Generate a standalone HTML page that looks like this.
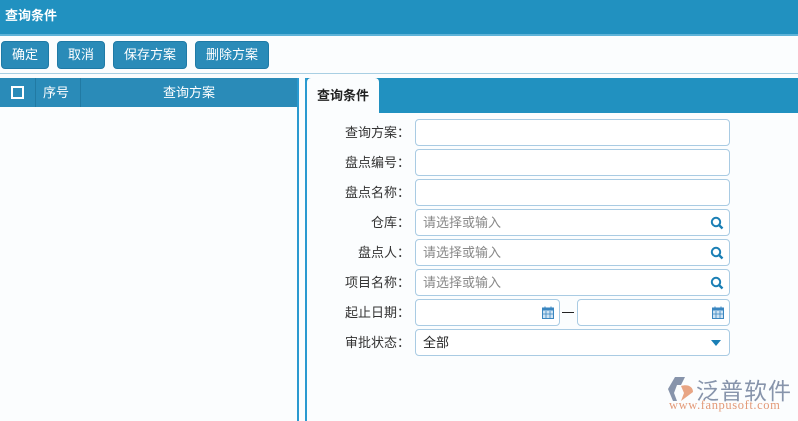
<!DOCTYPE html>
<html><head><meta charset="utf-8"><style>
*{margin:0;padding:0;box-sizing:border-box}
body{width:798px;height:421px;background:#fbfdfe;font-family:"Liberation Sans","Noto Sans CJK SC",sans-serif;font-size:13px;position:relative;overflow:hidden;color:#222}
.abs{position:absolute}
.top{left:0;top:0;width:798px;background:#2191c0;color:#fff;font-weight:bold;font-size:13px;line-height:32px;padding-left:5px;border-bottom:2px solid #5fb3d8;height:36px}
.btn{top:41px;height:28px;background:#2a8bb8;border:1px solid #1f7aa6;border-radius:4px;color:#fff;line-height:26px;text-align:center;font-size:13px}
.sep{left:0;top:73px;width:798px;height:1px;background:#a8cfe3}
.lh{left:0;top:78px;width:297px;height:29px;background:#2a8bb8;color:#fff;line-height:29px}
.lb{left:297px;top:78px;width:2px;height:343px;background:#2a9ad0}
.rb{left:305px;top:78px;width:2px;height:343px;background:#2a9ad0}
.rh{left:307px;top:78px;width:491px;height:35px;background:#2191c0}
.tab{left:307px;top:78px;width:72px;height:35px;background:#fbfdfe;border-radius:4px 4px 0 0;font-weight:bold;line-height:36px;text-align:center;color:#222}
.lbl{left:300px;width:110px;text-align:right;height:27px;line-height:27px;color:#333}
.in{left:415px;width:315px;height:27px;border:1px solid #a9cbe3;border-radius:4px;background:#fff;line-height:25px;padding-left:7px;color:#888}
.ic{position:absolute;right:5px;top:6px}
</style></head><body>
<div class="abs top">查询条件</div>
<div class="abs btn" style="left:1px;width:48px">确定</div>
<div class="abs btn" style="left:57px;width:48px">取消</div>
<div class="abs btn" style="left:113px;width:74px">保存方案</div>
<div class="abs btn" style="left:195px;width:74px">删除方案</div>
<div class="abs sep"></div>
<div class="abs lh">
<div class="abs" style="left:11px;top:8px;width:13px;height:13px;border:2px solid #fff;background:#2a8bb8"></div>
<div class="abs" style="left:35px;top:0;width:1px;height:29px;background:#217aa3"></div>
<div class="abs" style="left:43px">序号</div>
<div class="abs" style="left:80px;top:0;width:1px;height:29px;background:#217aa3"></div>
<div class="abs" style="left:81px;width:216px;text-align:center">查询方案</div>
</div>
<div class="abs lb"></div>
<div class="abs rb"></div>
<div class="abs rh"></div>
<div class="abs tab">查询条件</div>

<div class="abs lbl" style="top:119px">查询方案：</div><div class="abs in" style="top:119px"></div>
<div class="abs lbl" style="top:149px">盘点编号：</div><div class="abs in" style="top:149px"></div>
<div class="abs lbl" style="top:179px">盘点名称：</div><div class="abs in" style="top:179px"></div>
<div class="abs lbl" style="top:209px">仓库：</div><div class="abs in" style="top:209px">请选择或输入<svg class="ic" width="14" height="14" viewBox="0 0 14 14"><circle cx="6" cy="6" r="4.2" fill="none" stroke="#1a7fb5" stroke-width="2"/><path d="M9 9l3.5 3.5" stroke="#1a7fb5" stroke-width="2.4"/></svg></div>
<div class="abs lbl" style="top:239px">盘点人：</div><div class="abs in" style="top:239px">请选择或输入<svg class="ic" width="14" height="14" viewBox="0 0 14 14"><circle cx="6" cy="6" r="4.2" fill="none" stroke="#1a7fb5" stroke-width="2"/><path d="M9 9l3.5 3.5" stroke="#1a7fb5" stroke-width="2.4"/></svg></div>
<div class="abs lbl" style="top:269px">项目名称：</div><div class="abs in" style="top:269px">请选择或输入<svg class="ic" width="14" height="14" viewBox="0 0 14 14"><circle cx="6" cy="6" r="4.2" fill="none" stroke="#1a7fb5" stroke-width="2"/><path d="M9 9l3.5 3.5" stroke="#1a7fb5" stroke-width="2.4"/></svg></div>
<div class="abs lbl" style="top:299px">起止日期：</div>
<div class="abs in" style="top:299px;width:145px"><svg class="ic" width="12" height="13" viewBox="0 0 12 13"><rect x="0.5" y="2" width="11" height="10.5" fill="#cfe3f3" stroke="#3a86c0"/><rect x="0.5" y="2" width="11" height="2.5" fill="#3a86c0"/><path d="M4 5v7M8 5v7M1 8h10" stroke="#3a86c0" stroke-width=".8"/><path d="M3 0.5v3M9 0.5v3" stroke="#3a86c0"/></svg></div>
<div class="abs" style="left:562px;top:312px;width:12px;height:1px;background:#222"></div>
<div class="abs in" style="top:299px;left:577px;width:153px"><svg class="ic" width="12" height="13" viewBox="0 0 12 13"><rect x="0.5" y="2" width="11" height="10.5" fill="#cfe3f3" stroke="#3a86c0"/><rect x="0.5" y="2" width="11" height="2.5" fill="#3a86c0"/><path d="M4 5v7M8 5v7M1 8h10" stroke="#3a86c0" stroke-width=".8"/><path d="M3 0.5v3M9 0.5v3" stroke="#3a86c0"/></svg></div>
<div class="abs lbl" style="top:329px">审批状态：</div>
<div class="abs in" style="top:329px;color:#222">全部<svg class="ic" style="top:10px;right:8px" width="10" height="6" viewBox="0 0 10 6"><path d="M0 0h10L5 6z" fill="#1a7fb5"/></svg></div>

<svg class="abs" style="left:667px;top:376px" width="30" height="26" viewBox="0 0 30 26"><path d="M8 1h10l-4 8h-4l-3 8 3 8H6L1 13z" fill="#8794ab"/><path d="M14 10c6-2 12 0 12 6l-12 9 3-8z" fill="#e8a584"/></svg>
<div class="abs" style="left:696px;top:372px;font-size:23px;color:#8794ab;letter-spacing:1px">泛普软件</div>
<div class="abs" style="left:669px;top:398px;font-size:12.5px;color:#e39a78;font-family:'Liberation Serif',serif;letter-spacing:.6px">www.fanpusoft.com</div>
</body></html>
